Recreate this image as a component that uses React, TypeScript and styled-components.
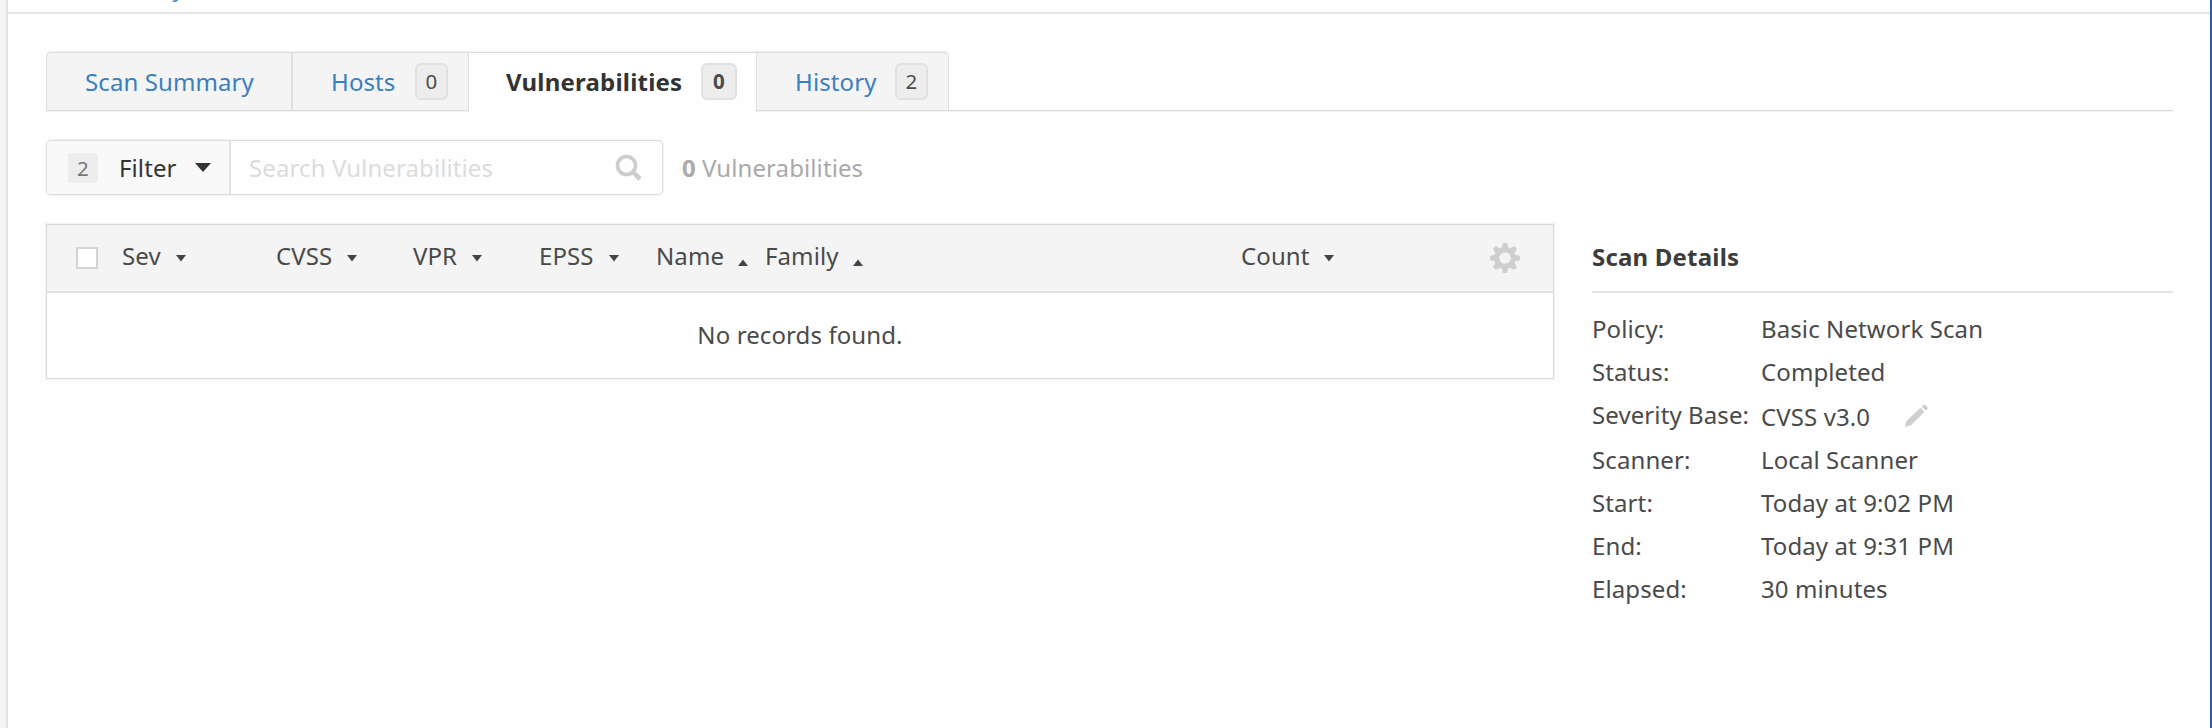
import React from "react";
import styled, { createGlobalStyle } from "styled-components";

const GlobalStyle = createGlobalStyle`
  * { box-sizing: border-box; }
  body { margin: 0; background: #fefefe; font-family: "Noto Sans", "Open Sans", sans-serif; font-size: 24px; line-height: 32px; letter-spacing: 0.1px; color: #4a4a4a; }
`;

const Page = styled.div`
  display: flex;
  width: 2212px;
  height: 728px;
  overflow: hidden;
  background: #fefefe;
  border-right: 2px solid #2a5fa8;
`;
const SideStrip = styled.div`
  flex: none;
  width: 8px;
  background: #f4f4f4;
  border-right: 2px solid #e3e3e3;
`;
const Main = styled.main`
  flex: 1;
  min-width: 0;
`;
const Header = styled.header`
  display: flex;
  align-items: flex-end;
  height: 14px;
  padding-left: 62px;
  overflow: hidden;
  border-bottom: 2px solid #e5e5e5;
`;
const BackLink = styled.a`
  color: #3a80c0;
  font-size: 22px;
  line-height: 30px;
  margin-bottom: 9px;
  white-space: nowrap;
`;
const Content = styled.div`
  padding: 38px 37px 0 38px;
`;
const TabBar = styled.nav`
  display: flex;
  height: 59px;
  border-bottom: 1px solid #dcdcdc;
  box-shadow: 0 1px 0 #f2f2f2;
`;
const Text = styled.span<{ $w: number }>`
  flex: none;
  width: ${(p) => p.$w}px;
  white-space: nowrap;
`;
const Tab = styled.a<{ $w: number; $active?: boolean; $edge?: "left" | "right"; $pad: number }>`
  display: flex;
  align-items: center;
  flex: none;
  width: ${(p) => p.$w}px;
  height: ${(p) => (p.$active ? 60 : 58)}px;
  padding: 0 0 ${(p) => (p.$active ? 2 : 0)}px ${(p) => p.$pad}px;
  border-top: 1px solid #dcdcdc;
  border-right: ${(p) => (p.$edge === "left" ? 2 : 1)}px solid #dfdfdf;
  border-left: ${(p) => (p.$edge === "left" ? 1 : 0)}px solid #dcdcdc;
  border-radius: ${(p) => (p.$edge === "left" ? "5px 0 0 0" : p.$edge === "right" ? "0 5px 0 0" : "0")};
  background: ${(p) => (p.$active ? "#fefefe" : "#f4f4f4")};
  box-shadow: 0 -1px 0 #f2f2f2;
  color: ${(p) => (p.$active ? "#333" : "#3a80c0")};
  font-weight: ${(p) => (p.$active ? 700 : 400)};
  letter-spacing: ${(p) => (p.$active ? 0.2 : 0.1)}px;
`;
const Badge = styled.span<{ $w?: number; $soft?: boolean }>`
  display: flex;
  align-items: center;
  justify-content: center;
  flex: none;
  width: ${(p) => p.$w ?? 33}px;
  height: ${(p) => (p.$soft ? 30 : 37)}px;
  padding-bottom: ${(p) => (p.$soft ? 0 : 1)}px;
  border: ${(p) => (p.$soft ? 0 : 2)}px solid #e1e1e1;
  border-radius: ${(p) => (p.$soft ? 3 : 6)}px;
  background: #ededed;
  color: ${(p) => (p.$soft ? "#777" : "#4c4c4c")};
  font-size: 20.5px;
  line-height: 30px;
`;
const Toolbar = styled.div`
  display: flex;
  align-items: center;
  height: 55px;
  margin-top: 29px;
`;
const SearchGroup = styled.div`
  display: flex;
  width: 617px;
  height: 55px;
  border: 1px solid #dcdcdc;
  border-radius: 5px;
  box-shadow: 0 0 0 1px #f3f3f3;
`;
const FilterButton = styled.div`
  display: flex;
  align-items: center;
  width: 184px;
  padding-left: 21px;
  border-right: 2px solid #e2e2e2;
  border-radius: 4px 0 0 4px;
  background: #f9f9f9;
  color: #333;
  ${Text} { margin-left: 21px; }
`;
const SearchField = styled.div`
  display: flex;
  align-items: center;
  flex: 1;
  padding-left: 18px;
  color: #dcdcdc;
  svg { margin-left: 124px; }
`;
const ResultCount = styled.div`
  display: flex;
  margin-left: 19px;
  color: #a9a9a9;
  b { width: 20px; }
`;
const Columns = styled.div`
  display: flex;
  align-items: flex-start;
  gap: 38px;
  margin-top: 29px;
`;
const Table = styled.section`
  width: 1508px;
  height: 155px;
  border: 1px solid #dadada;
  box-shadow: 0 0 0 1px #f2f2f2;
`;
const TableHead = styled.div`
  display: flex;
  align-items: center;
  height: 68px;
  padding: 0 0 4px 29px;
  background: #f4f4f4;
  border-bottom: 2px solid #e0e0e0;
  > svg { margin-top: 3px; }
`;
const Checkbox = styled.span`
  width: 22px;
  height: 22px;
  margin: 3px 24px 0 0;
  border: 2px solid #d4d4d4;
  background: #fff;
`;
const HeadCell = styled.div<{ $w: number }>`
  display: flex;
  align-items: center;
  flex: none;
  width: ${(p) => p.$w}px;
`;
const Caret = styled.svg<{ $up?: boolean }>`
  flex: none;
  margin-top: ${(p) => (p.$up ? 12 : 5)}px;
`;
const Empty = styled.div`
  display: flex;
  justify-content: center;
  padding-top: 26px;
`;
const Details = styled.aside`
  flex: 1;
`;
const DetailsTitle = styled.h2`
  height: 69px;
  margin: 0 0 20px;
  padding-top: 17px;
  border-bottom: 2px solid #e5e5e5;
  color: #3c3c3c;
  font-size: 24px;
  line-height: 32px;
  letter-spacing: 0.2px;
`;
const DetailRow = styled.div<{ $h: number }>`
  display: flex;
  height: ${(p) => p.$h}px;
`;
const EditableValue = styled.div`
  display: flex;
  padding-top: 2px;
  svg { margin-top: 3px; }
`;

const DownArrow = () => (
  <Caret width="10" height="7" viewBox="0 0 10 7"><path d="M0 0h10L5 6.5z" fill="#444" /></Caret>
);
const UpArrow = () => (
  <Caret $up width="10" height="7" viewBox="0 0 10 7"><path d="M0 7h10L5 .5z" fill="#444" /></Caret>
);
const SearchIcon = () => (
  <svg width="28" height="28" viewBox="0 0 28 28" fill="none" stroke="#cdcdcd">
    <circle cx="11.5" cy="11.5" r="9" strokeWidth="3.6" />
    <path d="M18.2 18.2L25 25" strokeWidth="4.6" />
  </svg>
);
const GearIcon = () => (
  <svg width="30" height="30" viewBox="-15 -15 30 30">
    {[0, 45, 90, 135, 180, 225, 270, 315].map((a) => (
      <path key={a} d="M-3.6 -9.5L-2 -15H2L3.6 -9.5z" fill="#cfcfcf" transform={`rotate(${a})`} />
    ))}
    <circle r="8.3" fill="none" stroke="#cfcfcf" strokeWidth="5" />
  </svg>
);
const PencilIcon = () => (
  <svg width="24" height="24" viewBox="0 0 24 24" fill="#cfcfcf">
    <path d="M0 23L1.5 17L15.5 3.7L19.5 7.7L6 21.2z" />
    <path d="M16.7 2.5L18.2 1Q19.2 .2 20.2 1.1L22.4 3.3Q23.3 4.2 22.5 5.1L20.8 6.6z" />
  </svg>
);

const columns = [
  { label: "Sev", text: 54, width: 154 },
  { label: "CVSS", text: 71, width: 137 },
  { label: "VPR", text: 59, width: 126 },
  { label: "EPSS", text: 70, width: 117 },
  { label: "Name", text: 82, width: 109, up: true },
  { label: "Family", text: 88, width: 476, up: true },
  { label: "Count", text: 83, width: 249 },
];
const details = [
  { label: "Policy:", value: "Basic Network Scan", height: 43 },
  { label: "Status:", value: "Completed", height: 43 },
  { label: "Severity Base:", value: "CVSS v3.0", height: 45, editable: true },
  { label: "Scanner:", value: "Local Scanner", height: 43 },
  { label: "Start:", value: "Today at 9:02 PM", height: 43 },
  { label: "End:", value: "Today at 9:31 PM", height: 43 },
  { label: "Elapsed:", value: "30 minutes", height: 43 },
];

export default function App() {
  return (
    <>
      <GlobalStyle />
      <Page>
        <SideStrip />
        <Main>
          <Header><BackLink>Back to My Scans</BackLink></Header>
          <Content>
            <TabBar>
              <Tab $w={247} $pad={38} $edge="left"><Text $w={170}>Scan Summary</Text></Tab>
              <Tab $w={176} $pad={38}><Text $w={84}>Hosts</Text><Badge>0</Badge></Tab>
              <Tab $w={288} $pad={37} $active><Text $w={195}>Vulnerabilities</Text><Badge $w={36}>0</Badge></Tab>
              <Tab $w={192} $pad={38} $edge="right"><Text $w={100}>History</Text><Badge>2</Badge></Tab>
            </TabBar>
            <Toolbar>
              <SearchGroup>
                <FilterButton>
                  <Badge $w={30} $soft>2</Badge>
                  <Text $w={76}>Filter</Text>
                  <svg width="16" height="10" viewBox="0 0 16 10"><path d="M0 0H16L8 9z" fill="#333" /></svg>
                </FilterButton>
                <SearchField><Text $w={242}>Search Vulnerabilities</Text><SearchIcon /></SearchField>
              </SearchGroup>
              <ResultCount><b>0</b><Text $w={161}>Vulnerabilities</Text></ResultCount>
            </Toolbar>
            <Columns>
              <Table>
                <TableHead>
                  <Checkbox />
                  {columns.map((c) => (
                    <HeadCell key={c.label} $w={c.width}>
                      <Text $w={c.text}>{c.label}</Text>
                      {c.up ? <UpArrow /> : <DownArrow />}
                    </HeadCell>
                  ))}
                  <GearIcon />
                </TableHead>
                <Empty>No records found.</Empty>
              </Table>
              <Details>
                <DetailsTitle>Scan Details</DetailsTitle>
                {details.map((d) => (
                  <DetailRow key={d.label} $h={d.height}>
                    <Text $w={169}>{d.label}</Text>
                    {d.editable ? (
                      <EditableValue><Text $w={144}>{d.value}</Text><PencilIcon /></EditableValue>
                    ) : (
                      <span>{d.value}</span>
                    )}
                  </DetailRow>
                ))}
              </Details>
            </Columns>
          </Content>
        </Main>
      </Page>
    </>
  );
}
